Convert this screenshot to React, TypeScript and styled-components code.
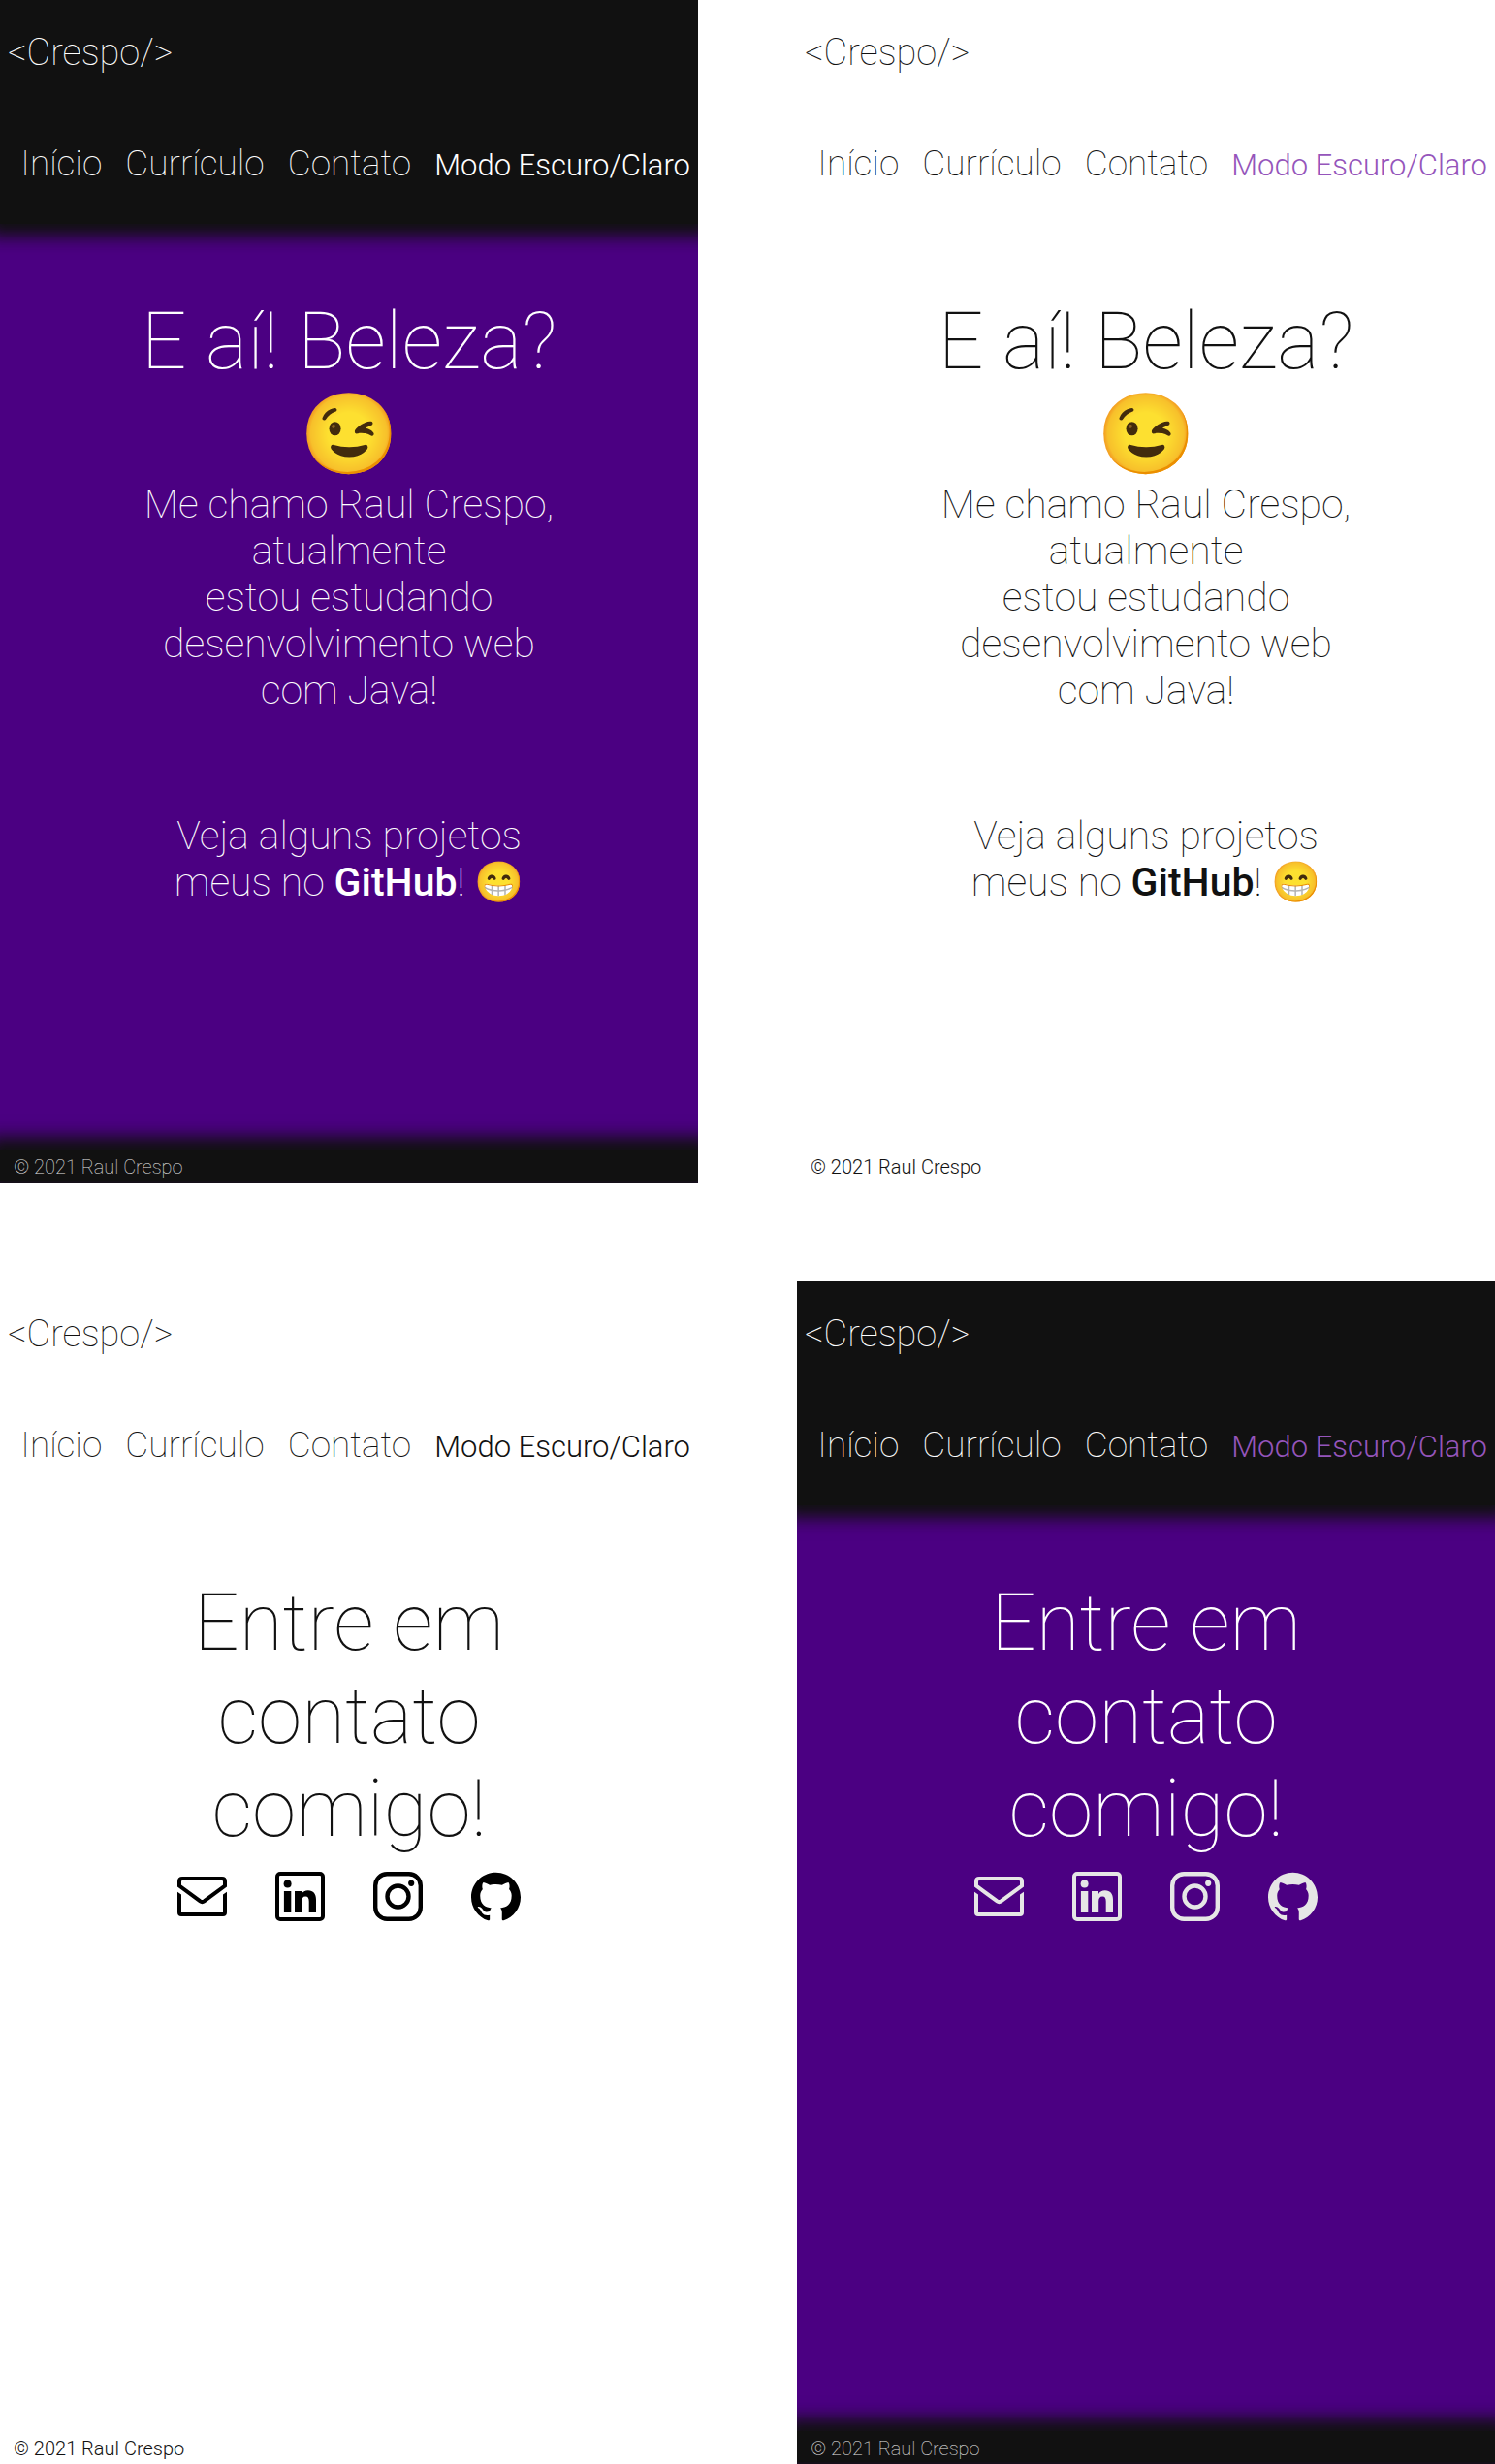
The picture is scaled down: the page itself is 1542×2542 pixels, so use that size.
import React from "react";
import styled, { createGlobalStyle, ThemeProvider } from "styled-components";

type Palette = {
  page: string;
  bar: string;
  heading: string;
  text: string;
  toggle: string;
  note: string;
  noteWeight: number;
  icon: string;
};

const dark: Palette = {
  page: "#4b0082",
  bar: "#111111",
  heading: "#ffffff",
  text: "#ffffff",
  toggle: "#ffffff",
  note: "#e6e6e6",
  noteWeight: 100,
  icon: "#e6e6e6",
};

const light: Palette = {
  page: "#ffffff",
  bar: "#ffffff",
  heading: "#111111",
  text: "#111111",
  toggle: "#111111",
  note: "#111111",
  noteWeight: 300,
  icon: "#000000",
};

const GlobalStyle = createGlobalStyle`
  *, *::before, *::after { box-sizing: border-box; }
  body { margin: 0; background: #ffffff; }
`;

const Board = styled.div`
  display: grid;
  grid-template-columns: 1fr 1fr;
  gap: 102px;
  font-family: Roboto, "Noto Sans", sans-serif;
  font-weight: 100;
  line-height: 1.2;
`;

const Screen = styled.section`
  display: flex;
  flex-direction: column;
  min-height: 1220px;
  overflow: hidden;
  background: ${({ theme }) => theme.page};
  color: ${({ theme }) => theme.text};
`;

const Header = styled.header`
  display: flex;
  flex-direction: column;
  gap: 71px;
  padding: 32px 8px 40px;
  background: ${({ theme }) => theme.bar};
  box-shadow: 0 0 16px 13px ${({ theme }) => theme.bar};
`;

const Logo = styled.a`
  align-self: flex-start;
  font-size: 38px;
  line-height: 44px;
  color: inherit;
  text-decoration: none;
`;

const Nav = styled.nav`
  display: flex;
  justify-content: flex-end;
  align-items: baseline;
  gap: 24px;
  white-space: nowrap;
`;

const NavLink = styled.a`
  font-size: 37px;
  line-height: 44px;
  color: inherit;
  text-decoration: none;
`;

const ModeButton = styled.button<{ $active?: boolean }>`
  padding: 0;
  border: 0;
  background: none;
  font-family: inherit;
  font-size: 31px;
  font-weight: 300;
  line-height: 40px;
  color: ${({ $active, theme }) => ($active ? "#9555bb" : theme.toggle)};
  cursor: pointer;
`;

const Main = styled.main`
  flex: 1;
  padding: 73px 144px 0;
  text-align: center;
`;

const Title = styled.h1`
  margin: 0;
  font-size: 82px;
  font-weight: 100;
  line-height: 96px;
  color: ${({ theme }) => theme.heading};
`;

const Lead = styled.p`
  margin: 0 0 102px;
  font-size: 41px;
  line-height: 48px;
`;

const StrongLink = styled.a`
  font-weight: 500;
  color: inherit;
  text-decoration: none;
`;

const Socials = styled.ul`
  display: flex;
  justify-content: center;
  gap: 50px;
  margin: 0;
  padding: 17px 0 0;
  list-style: none;
`;

const SocialLink = styled.a`
  display: block;
  color: ${({ theme }) => theme.icon};

  svg {
    display: block;
    width: 51px;
    height: 51px;
  }
`;

const Footer = styled.footer`
  margin-bottom: 2px;
  padding: 6px 14px 2px;
  background: ${({ theme }) => theme.bar};
  box-shadow: 0 0 16px 13px ${({ theme }) => theme.bar};
  font-size: 20px;
  font-weight: ${({ theme }) => theme.noteWeight};
  line-height: 24px;
  color: ${({ theme }) => theme.note};
`;

const MailIcon = () => (
  <svg viewBox="0 0 51 51" fill="none" stroke="currentColor" strokeWidth="4">
    <path d="M2 14.600V10Q2 7 5 7H46Q49 7 49 10V14.600L27.500 30.400Q25.500 31.800 23.500 30.400Z" />
    <path d="M0 20.800L4 23.600V42H47V23.600L51 20.800V42Q51 46 47 46H4Q0 46 0 42Z" fill="currentColor" stroke="none" />
  </svg>
);

const LinkedinIcon = () => (
  <svg viewBox="0 0 51 51" fill="currentColor">
    <rect x="2" y="2" width="47" height="47" rx="3" fill="none" stroke="currentColor" strokeWidth="4" />
    <circle cx="12.600" cy="12.500" r="4" />
    <path d="M8.900 20h7.400V42H8.900zM20 20h7v3c1.500-2.400 3.700-3.700 6.800-3.700 5.400 0 8.200 3.500 8.200 9.700v13h-7.300V30.700c0-3.300-1-5.200-3.600-5.200-2.800 0-3.900 2-3.900 5.200V42H20z" />
  </svg>
);

const InstagramIcon = () => (
  <svg viewBox="0 0 51 51" fill="none" stroke="currentColor" strokeWidth="4.400">
    <rect x="2.200" y="2.200" width="46.600" height="46.600" rx="12" />
    <circle cx="25.500" cy="25.500" r="11" />
    <circle cx="39.200" cy="11.800" r="3.100" fill="currentColor" stroke="none" />
  </svg>
);

const GithubIcon = () => (
  <svg viewBox="0 0 24 24" fill="currentColor">
    <path d="M12 .297c-6.630 0-12 5.373-12 12 0 5.303 3.438 9.800 8.205 11.385.6.113.82-.258.82-.577 0-.285-.010-1.040-.015-2.040-3.338.724-4.042-1.610-4.042-1.610C4.422 18.070 3.633 17.700 3.633 17.700c-1.087-.744.084-.729.084-.729 1.205.084 1.838 1.236 1.838 1.236 1.070 1.835 2.809 1.305 3.495.998.108-.776.417-1.305.760-1.605-2.665-.300-5.466-1.332-5.466-5.930 0-1.310.465-2.380 1.235-3.220-.135-.303-.540-1.523.105-3.176 0 0 1.005-.322 3.300 1.230.960-.267 1.980-.399 3-.405 1.020.006 2.040.138 3 .405 2.280-1.552 3.285-1.230 3.285-1.230.645 1.653.240 2.873.120 3.176.765.840 1.230 1.910 1.230 3.220 0 4.610-2.805 5.625-5.475 5.920.420.360.810 1.096.810 2.220 0 1.606-.015 2.896-.015 3.286 0 .315.210.690.825.570C20.565 22.092 24 17.592 24 12.297c0-6.627-5.373-12-12-12" />
  </svg>
);

const socials = [
  { name: "E-mail", Icon: MailIcon },
  { name: "LinkedIn", Icon: LinkedinIcon },
  { name: "Instagram", Icon: InstagramIcon },
  { name: "GitHub", Icon: GithubIcon },
];

const Home = () => (
  <>
    <Title>E aí! Beleza? 😉</Title>
    <Lead>
      Me chamo Raul Crespo, atualmente
      <br />
      estou estudando desenvolvimento web com Java!
    </Lead>
    <Lead>
      Veja alguns projetos meus no <StrongLink href="#github">GitHub</StrongLink>! 😁
    </Lead>
  </>
);

const Contact = () => (
  <>
    <Title>Entre em contato comigo!</Title>
    <Socials>
      {socials.map(({ name, Icon }) => (
        <li key={name}>
          <SocialLink href={`#${name.toLowerCase()}`} aria-label={name}>
            <Icon />
          </SocialLink>
        </li>
      ))}
    </Socials>
  </>
);

type PageProps = { palette: Palette; active?: boolean; children: React.ReactNode };

const Page = ({ palette, active, children }: PageProps) => (
  <ThemeProvider theme={palette}>
    <Screen>
      <Header>
        <Logo href="#inicio">&lt;Crespo/&gt;</Logo>
        <Nav>
          <NavLink href="#inicio">Início</NavLink>
          <NavLink href="#curriculo">Currículo</NavLink>
          <NavLink href="#contato">Contato</NavLink>
          <ModeButton type="button" $active={active}>
            Modo Escuro/Claro
          </ModeButton>
        </Nav>
      </Header>
      <Main>{children}</Main>
      <Footer>© 2021 Raul Crespo</Footer>
    </Screen>
  </ThemeProvider>
);

export default function App() {
  return (
    <>
      <GlobalStyle />
      <Board>
        <Page palette={dark}>
          <Home />
        </Page>
        <Page palette={light} active>
          <Home />
        </Page>
        <Page palette={light}>
          <Contact />
        </Page>
        <Page palette={dark} active>
          <Contact />
        </Page>
      </Board>
    </>
  );
}
